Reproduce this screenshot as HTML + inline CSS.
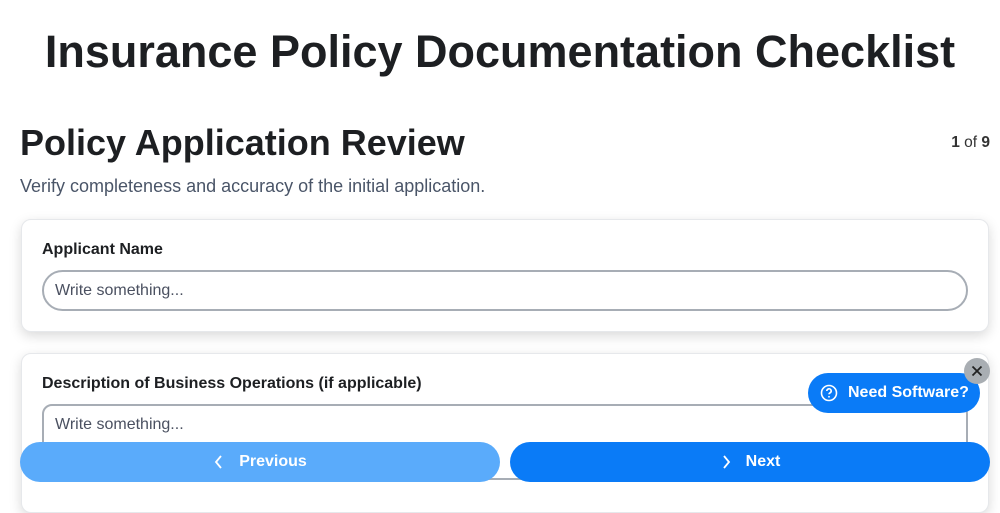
<!DOCTYPE html>
<html><head><style>
*{box-sizing:border-box;margin:0;padding:0}
body{width:1000px;height:500px;overflow:hidden;background:#fff;font-family:"Liberation Sans",sans-serif;color:#1f2328;position:relative}
h1{position:absolute;top:26px;left:0;width:1000px;text-align:center;font-size:45px;font-weight:bold;color:#1d1f22}
h2{position:absolute;top:122px;left:20px;font-size:36px;font-weight:bold;color:#1d1f22}
.pg{position:absolute;top:134px;right:10px;font-size:15.5px;color:#333}
.sub{position:absolute;top:176px;left:20px;font-size:18px;color:#4a5568}
.card{position:absolute;left:21px;width:968px;background:#fff;border-radius:10px;border:1px solid #e6e8eb;box-shadow:0 4px 12px rgba(0,0,0,0.15)}
.lbl{position:absolute;left:20px;font-size:16px;font-weight:bold;color:#1d1f22}
.inp{position:absolute;left:20px;width:926px;border:2px solid #a7adb5;background:#fff;font-size:16px;color:#4a5060;padding-left:11px}
.btn{position:absolute;top:442px;height:40px;border-radius:20px;color:#fff;font-size:16px;font-weight:bold;display:flex;align-items:center;justify-content:center;gap:14px}
</style></head><body>
<h1>Insurance Policy Documentation Checklist</h1>
<h2>Policy Application Review</h2>
<div class="pg"><b>1</b> of <b>9</b></div>
<div class="sub">Verify completeness and accuracy of the initial application.</div>
<div class="card" style="top:219px;height:113px">
<div class="lbl" style="top:21px">Applicant Name</div>
<div class="inp" style="top:50px;height:41px;border-radius:21px;line-height:37px">Write something...</div>
</div>
<div class="card" style="top:353px;height:160px">
<div class="lbl" style="top:21px">Description of Business Operations (if applicable)</div>
<div class="inp" style="top:50px;height:76px;border-radius:10px;padding-top:10px">Write something...</div>
</div>
<div class="btn" style="left:20px;width:480px;background:#5aabfb"><svg width="12" height="16" viewBox="0 0 12 16"><path d="M8 2L3 8l5 6" stroke="#fff" stroke-width="1.8" fill="none"/></svg>Previous</div>
<div class="btn" style="left:510px;width:480px;background:#0a7bf7"><svg width="12" height="16" viewBox="0 0 12 16"><path d="M4 2l5 6-5 6" stroke="#fff" stroke-width="1.8" fill="none"/></svg>Next</div>
<div style="position:absolute;left:808px;top:373px;width:172px;height:40px;border-radius:20px;background:#0a7bf7;color:#fff;font-weight:bold;font-size:16px;display:flex;align-items:center;padding-left:12px;gap:10px">
<svg width="18" height="18" viewBox="0 0 18 18"><circle cx="9" cy="9" r="7.5" stroke="#fff" stroke-width="1.6" fill="none"/><path d="M6.8 7a2.2 2.2 0 1 1 3 2c-.6.3-.8.7-.8 1.3" stroke="#fff" stroke-width="1.6" fill="none"/><circle cx="9" cy="12.8" r="0.9" fill="#fff"/></svg>Need Software?</div>
<div style="position:absolute;left:964px;top:358px;width:26px;height:26px;border-radius:13px;background:#a9aeb3;display:flex;align-items:center;justify-content:center"><svg width="12" height="12" viewBox="0 0 12 12"><path d="M1.5 1.5l9 9M10.5 1.5l-9 9" stroke="#222" stroke-width="1.8"/></svg></div>
</body></html>
